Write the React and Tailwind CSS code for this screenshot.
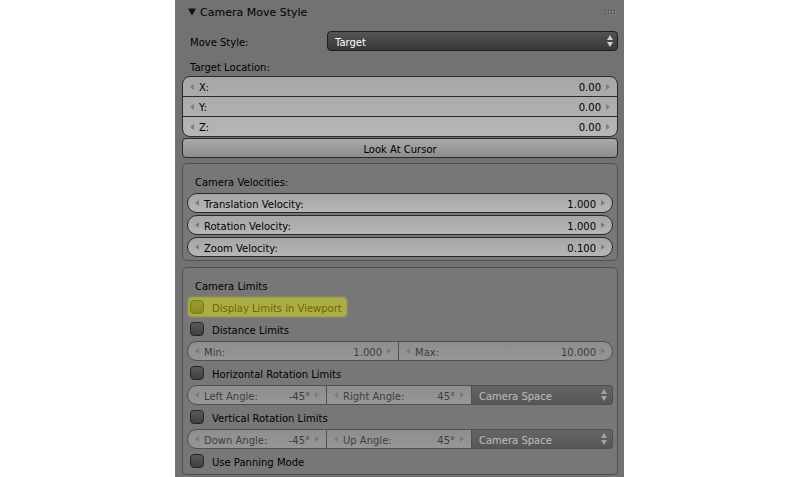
import React from 'react';

const ArrowLeft = ({ className = '' }) => (
  <svg width="4" height="6" viewBox="0 0 4 6" className={className}>
    <path d="M4 0V6L0 3Z" fill="currentColor" />
  </svg>
);

const ArrowRight = ({ className = '' }) => (
  <svg width="4" height="6" viewBox="0 0 4 6" className={className}>
    <path d="M0 0V6L4 3Z" fill="currentColor" />
  </svg>
);

const UpDown = ({ className = '' }) => (
  <svg width="6" height="12" viewBox="0 0 6 12" className={className}>
    <path d="M0 5L3 0L6 5Z M0 7H6L3 12Z" fill="currentColor" />
  </svg>
);

const Grip = () => (
  <svg width="11" height="5" viewBox="0 0 11 5">
    {[0, 3, 6, 9].map((x) =>
      [0, 3].map((y) => (
        <g key={`${x}-${y}`}>
          <rect x={x + 1} y={y + 1} width="1" height="1" fill="#8e8e8e" />
          <rect x={x} y={y} width="1" height="1" fill="#3a3a3a" />
        </g>
      ))
    )}
  </svg>
);

// number field contents: arrow, label, value, arrow
function NumField({ label, value, className = '' }) {
  return (
    <div className={`flex items-center h-full pl-[7px] pr-[7px] ${className}`}>
      <ArrowLeft className="shrink-0 text-[#7e7e7e]" />
      <span className="ml-[5px] pt-[3px] whitespace-nowrap">{label}</span>
      <span className="ml-auto pt-[3px] whitespace-nowrap">{value}</span>
      <ArrowRight className="ml-[5px] shrink-0 text-[#7e7e7e]" />
    </div>
  );
}

function Check({ label }) {
  return (
    <div className="flex items-center h-[20px] pl-[3px]">
      <div className="w-[14px] h-[14px] rounded-[4px] border border-[#242424] bg-linear-to-b from-[#5a5a5a] to-[#3e3e3e]" />
      <span className="ml-[8px] pt-[3px]">{label}</span>
    </div>
  );
}

function AngleRow({ left, leftVal, right, rightVal }) {
  return (
    <div className="flex h-[20px] opacity-50">
      <div className="w-[140px] rounded-l-[10px] border border-[#2a2a2a] bg-linear-to-b from-[#a6a6a6] to-[#b6b6b6]">
        <NumField label={left} value={leftVal} />
      </div>
      <div className="w-[145px] border-y border-r border-[#2a2a2a] bg-linear-to-b from-[#a6a6a6] to-[#b6b6b6]">
        <NumField label={right} value={rightVal} />
      </div>
      <div className="flex-1 flex items-center pl-[7px] pr-[5px] rounded-r-[4px] border-y border-r border-[#2a2a2a] bg-linear-to-b from-[#545454] to-[#383838] text-white">
        <span className="pt-[3px]">Camera Space</span>
        <UpDown className="ml-auto text-[#d0d0d0]" />
      </div>
    </div>
  );
}

const fieldBg = 'bg-linear-to-b from-[#a6a6a6] to-[#b6b6b6]';

export default function App() {
  return (
    <div className="w-[800px] h-[477px] bg-white font-['DejaVu_Sans',sans-serif] text-[10px] text-black leading-none">
      <div className="ml-[175px] w-[449px] h-full bg-[#727272] flex flex-col pl-[7px] pr-[6px]">
        {/* panel header */}
        <div className="h-[24px] flex items-center pl-[6px]">
          <svg width="8" height="8" viewBox="0 0 8 8">
            <path d="M0 0.5H8L4 7.5Z" fill="#111" />
          </svg>
          <span className="ml-[4px] text-[11px]">Camera Move Style</span>
          <div className="ml-auto mr-[2px] flex">
            <Grip />
          </div>
        </div>

        <div className="mt-[7px] h-[20px] flex items-center">
          <div className="w-[145px] pl-[8px] pt-[3px]">Move Style:</div>
          <div className="flex-1 h-full flex items-center pl-[7px] pr-[4px] rounded-[4px] border border-[#1e1e1e] bg-linear-to-b from-[#545454] to-[#383838] text-white">
            <span className="pt-[3px]">Target</span>
            <UpDown className="ml-auto text-[#d0d0d0]" />
          </div>
        </div>

        <div className="mt-[6px] h-[19px] flex items-center pl-[8px] pt-[2px]">Target Location:</div>

        <div className={`rounded-[8px] border border-[#2a2a2a] overflow-hidden ${fieldBg}`}>
          <div className="h-[19px]"><NumField label="X:" value="0.00" /></div>
          <div className="h-[20px] border-t border-[#2a2a2a]"><NumField label="Y:" value="0.00" /></div>
          <div className="h-[20px] border-t border-[#2a2a2a]"><NumField label="Z:" value="0.00" /></div>
        </div>

        <div className="mt-[1px] h-[20px] flex items-center justify-center pt-[3px] rounded-[4px] border border-[#2a2a2a] bg-linear-to-b from-[#a9a9a9] to-[#8d8d8d]">
          Look At Cursor
        </div>

        {/* velocities box */}
        <div className="mt-[5px] rounded-[5px] border border-[#505050] bg-[#777777] px-[4px] pt-[8px] pb-[3px] flex flex-col gap-[2px]">
          <div className="h-[19px] flex items-center pl-[8px] pt-[2px]">Camera Velocities:</div>
          <div className={`h-[20px] rounded-full border border-[#2a2a2a] ${fieldBg}`}>
            <NumField label="Translation Velocity:" value="1.000" />
          </div>
          <div className={`h-[20px] rounded-full border border-[#2a2a2a] ${fieldBg}`}>
            <NumField label="Rotation Velocity:" value="1.000" />
          </div>
          <div className={`h-[20px] rounded-full border border-[#2a2a2a] ${fieldBg}`}>
            <NumField label="Zoom Velocity:" value="0.100" />
          </div>
        </div>

        {/* limits box */}
        <div className="mt-[6px] rounded-[5px] border border-[#505050] bg-[#777777] px-[4px] pt-[7px] pb-[3px] flex flex-col gap-[2px]">
          <div className="h-[20px] flex items-center pl-[8px] pt-[3px]">Camera Limits</div>
          <div className="relative">
            <Check label="Display Limits in Viewport" />
            <div className="absolute left-[2px] top-[1px] bottom-[1px] w-[157px] rounded-[3px] bg-[rgba(255,255,0,0.4)] shadow-[0_0_2px_1px_rgba(255,255,0,0.4)]" />
          </div>
          <Check label="Distance Limits" />
          <div className={`h-[20px] flex rounded-full border border-[#2a2a2a] opacity-50 ${fieldBg}`}>
            <div className="w-[211px] border-r border-[#2a2a2a]"><NumField label="Min:" value="1.000" /></div>
            <div className="flex-1"><NumField label="Max:" value="10.000" /></div>
          </div>
          <Check label="Horizontal Rotation Limits" />
          <AngleRow left="Left Angle:" leftVal="-45°" right="Right Angle:" rightVal="45°" />
          <Check label="Vertical Rotation Limits" />
          <AngleRow left="Down Angle:" leftVal="-45°" right="Up Angle:" rightVal="45°" />
          <Check label="Use Panning Mode" />
        </div>
      </div>
    </div>
  );
}
